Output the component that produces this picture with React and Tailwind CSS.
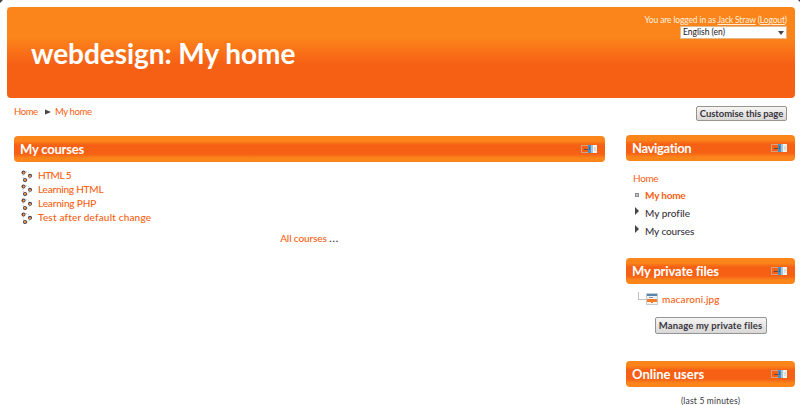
function DockIcon() {
  return (
    <svg width="16" height="10" viewBox="0 0 16 10" shapeRendering="crispEdges">
      <path d="M8 1.5H.5V8.5H8" fill="none" stroke="#d3a184" />
      <path d="M3 5H7V6H3Z" fill="#5b4a48" />
      <rect x="7" y="1" width="3" height="8" fill="#4b8fc4" />
      <rect x="8" y="3" width="1" height="3" fill="#2f6795" />
      <rect x="10" y="1" width="2" height="8" fill="#a9c3d2" />
      <rect x="12" y="1" width="4" height="8" fill="#f3f2ef" />
      <rect x="13" y="3" width="2" height="4" fill="#d8dde0" />
    </svg>
  );
}

function BlockHeader({ title, spacing }) {
  return (
    <div className="flex h-[26px] shrink-0 items-center justify-between rounded-[4px] bg-[linear-gradient(to_bottom,#fc851b_0,#fc851b_5px,#f66015_9px,#f66015_18px,#fc851b_22px,#fc851b_100%)] pr-2 pl-1.5">
      <h2 className={`pt-px text-[13px] leading-[25px] font-bold whitespace-nowrap text-white ${spacing}`}>{title}</h2>
      <DockIcon />
    </div>
  );
}

function CourseIcon() {
  return (
    <svg width="12" height="12" viewBox="0 0 12 12">
      <path d="M4.500 1.800Q7.500 1.200 8.500 4M8.500 8Q7.500 10 5.500 10.500M2.300 4.500Q1.500 7 3 9" fill="none" stroke="#a39b98" strokeWidth=".7" strokeDasharray="1.300 1.200" />
      <g fill="#403a48">
        <circle cx="2.500" cy="2.500" r="2" />
        <circle cx="9" cy="5.800" r="2" />
        <circle cx="4" cy="9.900" r="2" />
      </g>
      <g fill="#ff9a40">
        <circle cx="2.700" cy="2.700" r="1.100" />
        <circle cx="9" cy="6" r="1.100" />
        <circle cx="4" cy="9.900" r="1.100" />
      </g>
    </svg>
  );
}

function FileIcon() {
  return (
    <svg width="12" height="12" viewBox="0 0 12 12" shapeRendering="crispEdges">
      <rect x="0" y="0" width="12" height="12" fill="#c5cbd0" />
      <rect x="1" y="1" width="10" height="2" fill="#5685ad" />
      <rect x="1" y="3" width="10" height="3" fill="#edf1f3" />
      <rect x="1" y="6" width="10" height="3" fill="#f57c2b" />
      <rect x="3" y="4" width="4" height="1" fill="#8a94a0" />
      <rect x="1" y="9" width="10" height="2" fill="#f6f3ef" />
      <rect x="5" y="9" width="2" height="1" fill="#f57c2b" />
    </svg>
  );
}

const courses = [
  ["HTML 5", "tracking-[-0.5px]"],
  ["Learning HTML", "tracking-[-0.22px]"],
  ["Learning PHP", "tracking-[-0.15px]"],
  ["Test after default change", "tracking-[0.18px]"],
];

export default function App() {
  return (
    <div className="relative h-[405px] w-[800px] overflow-hidden bg-white font-['Trebuchet_MS',Lato,sans-serif] text-[10px] text-[#39353d] [font-variant-ligatures:none]">
      <svg className="absolute top-0 left-0" width="800" height="4">
        <path d="M0 0H3L0 3ZM800 0H798L800 2Z" fill="#46434b" />
      </svg>
      <div className="px-[7px] pt-[7px]">
        <header className="flex h-[91px] w-[788px] justify-between rounded-[4px] bg-[linear-gradient(to_bottom,#fc851b_0,#fc851b_30px,#f66015_57px,#f66015_100%)] pr-2 pl-6">
          <h1 className="pt-[28px] text-[28px] leading-[36px] font-bold tracking-[-0.05px] whitespace-nowrap text-white">webdesign: My home</h1>
          <div className="flex flex-col items-end pt-[7px]">
            <p className="text-[8.500px] leading-[12px] tracking-[-0.13px] whitespace-nowrap text-[#fff0df]">
              You are logged in as <a className="underline">Jack Straw</a> (<a className="underline">Logout</a>)
            </p>
            <div className="flex h-[13px] w-[107px] items-center justify-between border border-[#e2b98f] bg-white pr-[2px] pl-[2px] text-[8.500px] leading-[11px] text-[#18151b]">
              <span>English (en)</span>
              <svg width="6" height="4"><path d="M0 0H6L3 4Z" fill="#46434b" /></svg>
            </div>
          </div>
        </header>
      </div>
      <div className="flex h-[38px] items-start justify-between pr-[13px] pl-[14px]">
        <nav className="flex h-7 items-center text-[9.500px] text-[#f9600f]">
          <a className="w-[31px] tracking-[-0.4px]">Home</a>
          <svg width="7" height="6" className="mr-[3px]"><path d="M0 .5L6 3L0 5.500Z" fill="#46434b" /></svg>
          <a className="tracking-[-0.4px] whitespace-nowrap">My home</a>
        </nav>
        <button className="mt-2 flex h-[15px] w-[91px] items-center justify-center rounded-[2px] border border-[#9a928b] bg-linear-to-b from-[#f5f5f4] to-[#d9d8d6] text-[9.500px] leading-[13px] font-bold tracking-[-0.06px] whitespace-nowrap">Customise this page</button>
      </div>
      <main className="flex gap-[21px] pl-[14px]">
        <section className="w-[591px]">
          <BlockHeader title="My courses" spacing="tracking-[-0.2px]" />
          <ul className="mt-[7px] pl-[7px] text-[#f9600f]">
            {courses.map(([name, spacing]) => (
              <li key={name} className="flex h-[14px] items-center">
                <CourseIcon />
                <a className={`ml-[5px] pb-px leading-[13px] font-medium whitespace-nowrap ${spacing}`}>{name}</a>
              </li>
            ))}
          </ul>
          <p className="mt-[6px] text-center leading-[14px]"><a className="font-medium tracking-[-0.1px] text-[#f9600f]">All courses</a> <b className="tracking-[0.8px]">...</b></p>
        </section>
        <aside className="-mt-px w-[169px]">
          <BlockHeader title="Navigation" spacing="tracking-[-0.35px]" />
          <div className="h-[97px] pt-[8px] pl-[7px]">
            <a className="block leading-[18px] tracking-[-0.35px] text-[#f9600f]">Home</a>
            <div className="flex h-[17px] items-center">
              <span className="mr-[6px] mb-px ml-[2px] size-[4px] border border-[#8e8d94] bg-[#c5c4c8]" />
              <a className="font-bold tracking-[-0.2px] text-[#f9600f]">My home</a>
            </div>
            <div className="flex h-[18px] items-center">
              <svg width="4" height="8" className="mr-[6px] mb-[4px] ml-[2px]"><path d="M0 0L4 4L0 8Z" fill="#46434b" /></svg>
              <span className="pt-px font-medium">My profile</span>
            </div>
            <div className="flex h-[18px] items-center">
              <svg width="4" height="8" className="mr-[6px] mb-[4px] ml-[2px]"><path d="M0 0L4 4L0 8Z" fill="#46434b" /></svg>
              <span className="pt-px font-medium tracking-[-0.1px]">My courses</span>
            </div>
          </div>
          <BlockHeader title="My private files" spacing="tracking-[-0.15px]" />
          <div className="h-[77px] pt-[6px]">
            <div className="flex h-[18px] items-center pl-[12px]">
              <span className="mb-[6px] h-[8px] w-[8px] border-b border-l border-[#c2c2c2]" />
              <FileIcon />
              <a className="ml-[4px] font-medium tracking-[0.15px] text-[#f9600f]">macaroni.jpg</a>
            </div>
            <button className="mx-auto mt-[9px] flex h-[17px] w-[112px] items-center justify-center rounded-[2px] border border-[#92969a] bg-linear-to-b from-[#f5f5f4] to-[#d9d8d6] text-[9.500px] leading-[15px] font-bold tracking-[0.13px] whitespace-nowrap">Manage my private files</button>
          </div>
          <BlockHeader title="Online users" spacing="tracking-[0px]" />
          <p className="mt-[8px] text-center text-[8.500px] leading-[12px] tracking-[0.18px]">(last 5 minutes)</p>
        </aside>
      </main>
    </div>
  );
}
